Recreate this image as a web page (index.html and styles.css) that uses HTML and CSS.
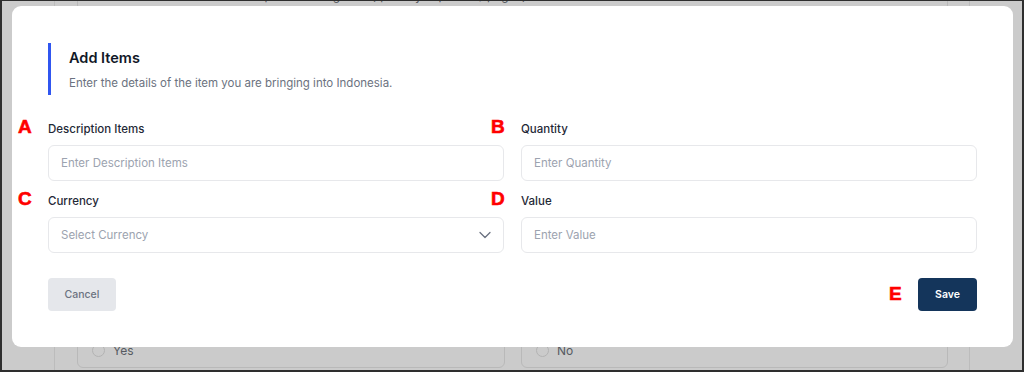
FILE: index.html
```html
<!DOCTYPE html>
<html lang="en">
<head>
<meta charset="utf-8">
<title>Add Items</title>
<link rel="stylesheet" href="styles.css">
</head>
<body>
<div class="frame">
  <div class="shell">
    <div class="bg-top">
      <div class="bg-card bg-card-top"><span class="bg-text">Description of the goods (quantity in pieces / pages)</span></div>
    </div>
    <div class="bg-bottom">
      <div class="bg-card"><span class="radio"></span><span class="bg-text">Yes</span></div>
      <div class="bg-card"><span class="radio"></span><span class="bg-text">No</span></div>
    </div>
  </div>

  <div class="modal">
    <div class="modal-head">
      <h2 class="modal-title">Add Items</h2>
      <p class="modal-sub">Enter the details of the item you are bringing into Indonesia.</p>
    </div>
    <div class="form-grid">
      <div class="field">
        <span class="mark mark-left">A</span>
        <label class="label">Description Items</label>
        <div class="input">Enter Description Items</div>
      </div>
      <div class="field">
        <span class="mark mark-right">B</span>
        <label class="label">Quantity</label>
        <div class="input">Enter Quantity</div>
      </div>
      <div class="field">
        <span class="mark mark-left">C</span>
        <label class="label">Currency</label>
        <div class="input select">
          <span>Select Currency</span>
          <svg class="chevron" width="12" height="8" viewBox="0 0 12 8"><path d="M1 1.5 L6 6.5 L11 1.5" fill="none" stroke="#6b7280" stroke-width="1.3" stroke-linecap="round" stroke-linejoin="round"/></svg>
        </div>
      </div>
      <div class="field">
        <span class="mark mark-right">D</span>
        <label class="label">Value</label>
        <div class="input">Enter Value</div>
      </div>
    </div>
    <div class="modal-foot">
      <button class="btn btn-cancel">Cancel</button>
      <div class="save-wrap">
        <span class="mark mark-e">E</span>
        <button class="btn btn-save">Save</button>
      </div>
    </div>
  </div>
</div>
</body>
</html>
```

FILE: styles.css
```css
* { box-sizing: border-box; }
html, body { margin: 0; padding: 0; }
body {
  width: 1024px;
  height: 372px;
  overflow: hidden;
  font-family: Inter, "Noto Sans", sans-serif;
}
.frame {
  position: relative;
  width: 1024px;
  height: 372px;
  border: 2px solid #2e2e2e;
  border-top-width: 1px;
  background: #cbcbcb;
  overflow: hidden;
}
.shell {
  margin: 0 52px;
  height: 100%;
  border-left: 1px solid #bcbcbc;
  border-right: 1px solid #bcbcbc;
  display: flex;
  flex-direction: column;
  justify-content: space-between;
  padding: 0 21px 2px 22px;
}
.bg-top { margin-top: -30px; }
.bg-card-top { height: 40px; padding: 16px 0 0 150px !important; align-items: flex-start !important; }
.bg-bottom {
  display: grid;
  grid-template-columns: 428px 427px;
  column-gap: 16px;
}
.bg-card {
  border: 1px solid #b9b9b9;
  border-radius: 6px;
  padding: 0 0 8px 14px;
  height: 40px;
  display: flex;
  align-items: flex-end;
  gap: 8px;
  color: #5c5f66;
}
.bg-text { font-size: 12px; line-height: 16px; color: #565a61; }
.radio {
  width: 13px;
  height: 13px;
  border: 1px solid #b3b3b3;
  border-radius: 50%;
  margin-bottom: 2px;
}

.modal {
  position: absolute;
  left: 10px;
  top: 5px;
  width: 1001px;
  background: #fff;
  border-radius: 9px;
  padding: 37px 36px 36px 36px;
}
.modal-head {
  border-left: 3px solid #3056f0;
  padding: 5px 0 4px 18px;
  height: 52px;
}
.modal-title {
  margin: 0;
  font-size: 14.5px;
  line-height: 20px;
  font-weight: 600;
  color: #111827;
}
.modal-sub {
  margin: 7px 0 0;
  font-size: 11.5px;
  line-height: 16px;
  color: #6b7280;
}
.form-grid {
  margin-top: 26px;
  display: grid;
  grid-template-columns: 456px 456px;
  column-gap: 17px;
  row-gap: 12px;
}
.field { position: relative; display: flex; flex-direction: column; gap: 8px; }
.label {
  font-size: 11.5px;
  line-height: 16px;
  font-weight: 500;
  color: #1f2937;
}
.input {
  height: 36px;
  border: 1px solid #e7e8eb;
  border-radius: 6px;
  padding: 0 12px;
  display: flex;
  align-items: center;
  font-size: 11.5px;
  color: #9ca3af;
}
.select { justify-content: space-between; padding-right: 12px; }
.chevron { display: block; }

.modal-foot {
  margin-top: 25px;
  display: flex;
  justify-content: space-between;
  align-items: center;
}
.btn {
  height: 33px;
  border: none;
  border-radius: 4px;
  font-family: Inter, "Noto Sans", sans-serif;
  font-size: 10.5px;
  padding: 0;
}
.btn-cancel {
  width: 68px;
  background: #e5e7eb;
  color: #6b7280;
  font-weight: 500;
}
.save-wrap { position: relative; }
.btn-save {
  width: 59px;
  background: #14355b;
  color: #fff;
  font-weight: 600;
}
.mark {
  position: absolute;
  font-family: "Liberation Sans", Arial, sans-serif;
  font-weight: 700;
  font-size: 19px;
  line-height: 18px;
  color: #ff0000;
  -webkit-text-stroke: 0.6px #ff0000;
}
.mark-left { left: -30px; top: -3px; }
.mark-right { left: -30px; top: -3px; }
.mark-e { left: -29px; top: 7px; }
```
